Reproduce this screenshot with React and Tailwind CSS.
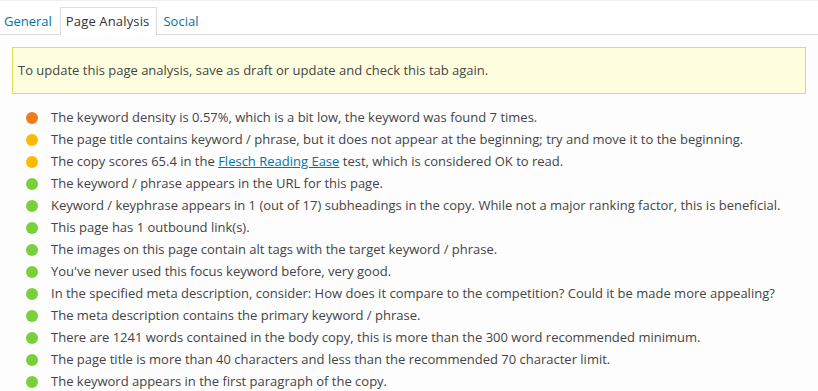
import React from 'react'

const results = [
  { color: 'bg-[#ee7c1b]', text: 'The keyword density is 0.57%, which is a bit low, the keyword was found 7 times.' },
  { color: 'bg-[#ffba00]', text: 'The page title contains keyword / phrase, but it does not appear at the beginning; try and move it to the beginning.' },
  { color: 'bg-[#ffba00]', flesch: true },
  { color: 'bg-[#7ad03a]', text: 'The keyword / phrase appears in the URL for this page.' },
  { color: 'bg-[#7ad03a]', text: 'Keyword / keyphrase appears in 1 (out of 17) subheadings in the copy. While not a major ranking factor, this is beneficial.' },
  { color: 'bg-[#7ad03a]', text: 'This page has 1 outbound link(s).' },
  { color: 'bg-[#7ad03a]', text: 'The images on this page contain alt tags with the target keyword / phrase.' },
  { color: 'bg-[#7ad03a]', text: "You've never used this focus keyword before, very good." },
  { color: 'bg-[#7ad03a]', text: 'In the specified meta description, consider: How does it compare to the competition? Could it be made more appealing?' },
  { color: 'bg-[#7ad03a]', text: 'The meta description contains the primary keyword / phrase.' },
  { color: 'bg-[#7ad03a]', text: 'There are 1241 words contained in the body copy, this is more than the 300 word recommended minimum.' },
  { color: 'bg-[#7ad03a]', text: 'The page title is more than 40 characters and less than the recommended 70 character limit.' },
  { color: 'bg-[#7ad03a]', text: 'The keyword appears in the first paragraph of the copy.' },
]

function App() {
  return (
    <div className="w-[818px] h-[391px] overflow-hidden bg-white text-[13px] text-[#444] font-['Open_Sans',sans-serif]">
      <div className="border-t border-[#f0f0f0]">
        {/* tabs */}
        <div className="flex h-[34px] items-end border-b border-[#dddddd]">
          <a className="pl-[3px] pr-[7px] h-[27px] leading-[27px] text-[#0073aa] border border-transparent">General</a>
          <a className="pl-[5px] pr-[7px] h-[28px] leading-[27px] text-[#333] bg-white border border-[#dddddd] border-b-0 -mb-px tracking-[0.15px]">Page Analysis</a>
          <a className="px-[5px] h-[27px] leading-[27px] text-[#0073aa] border border-transparent">Social</a>
        </div>

        <div className="bg-[#fdfdfd] pt-[12px] pl-[12px] pr-[12px]">
          <div className="bg-[#ffffe0] border border-[#e6db55] h-[47px] flex items-center pl-[5px]">
            To update this page analysis, save as draft or update and check this tab again.
          </div>

          <ul className="mt-[13px] pl-[14px]">
            {results.map((r, i) => (
              <li key={i} className="flex items-center h-[22px] whitespace-nowrap">
                <span className={'w-[12px] h-[12px] rounded-full shrink-0 ' + r.color}></span>
                <span className="ml-[13px]">
                  {r.flesch ? (
                    <>
                      The copy scores 65.4 in the{' '}
                      <a className="text-[#0073aa] underline">Flesch Reading Ease</a>{' '}
                      test, which is considered OK to read.
                    </>
                  ) : r.text}
                </span>
              </li>
            ))}
          </ul>
        </div>
      </div>
    </div>
  )
}

export default App
